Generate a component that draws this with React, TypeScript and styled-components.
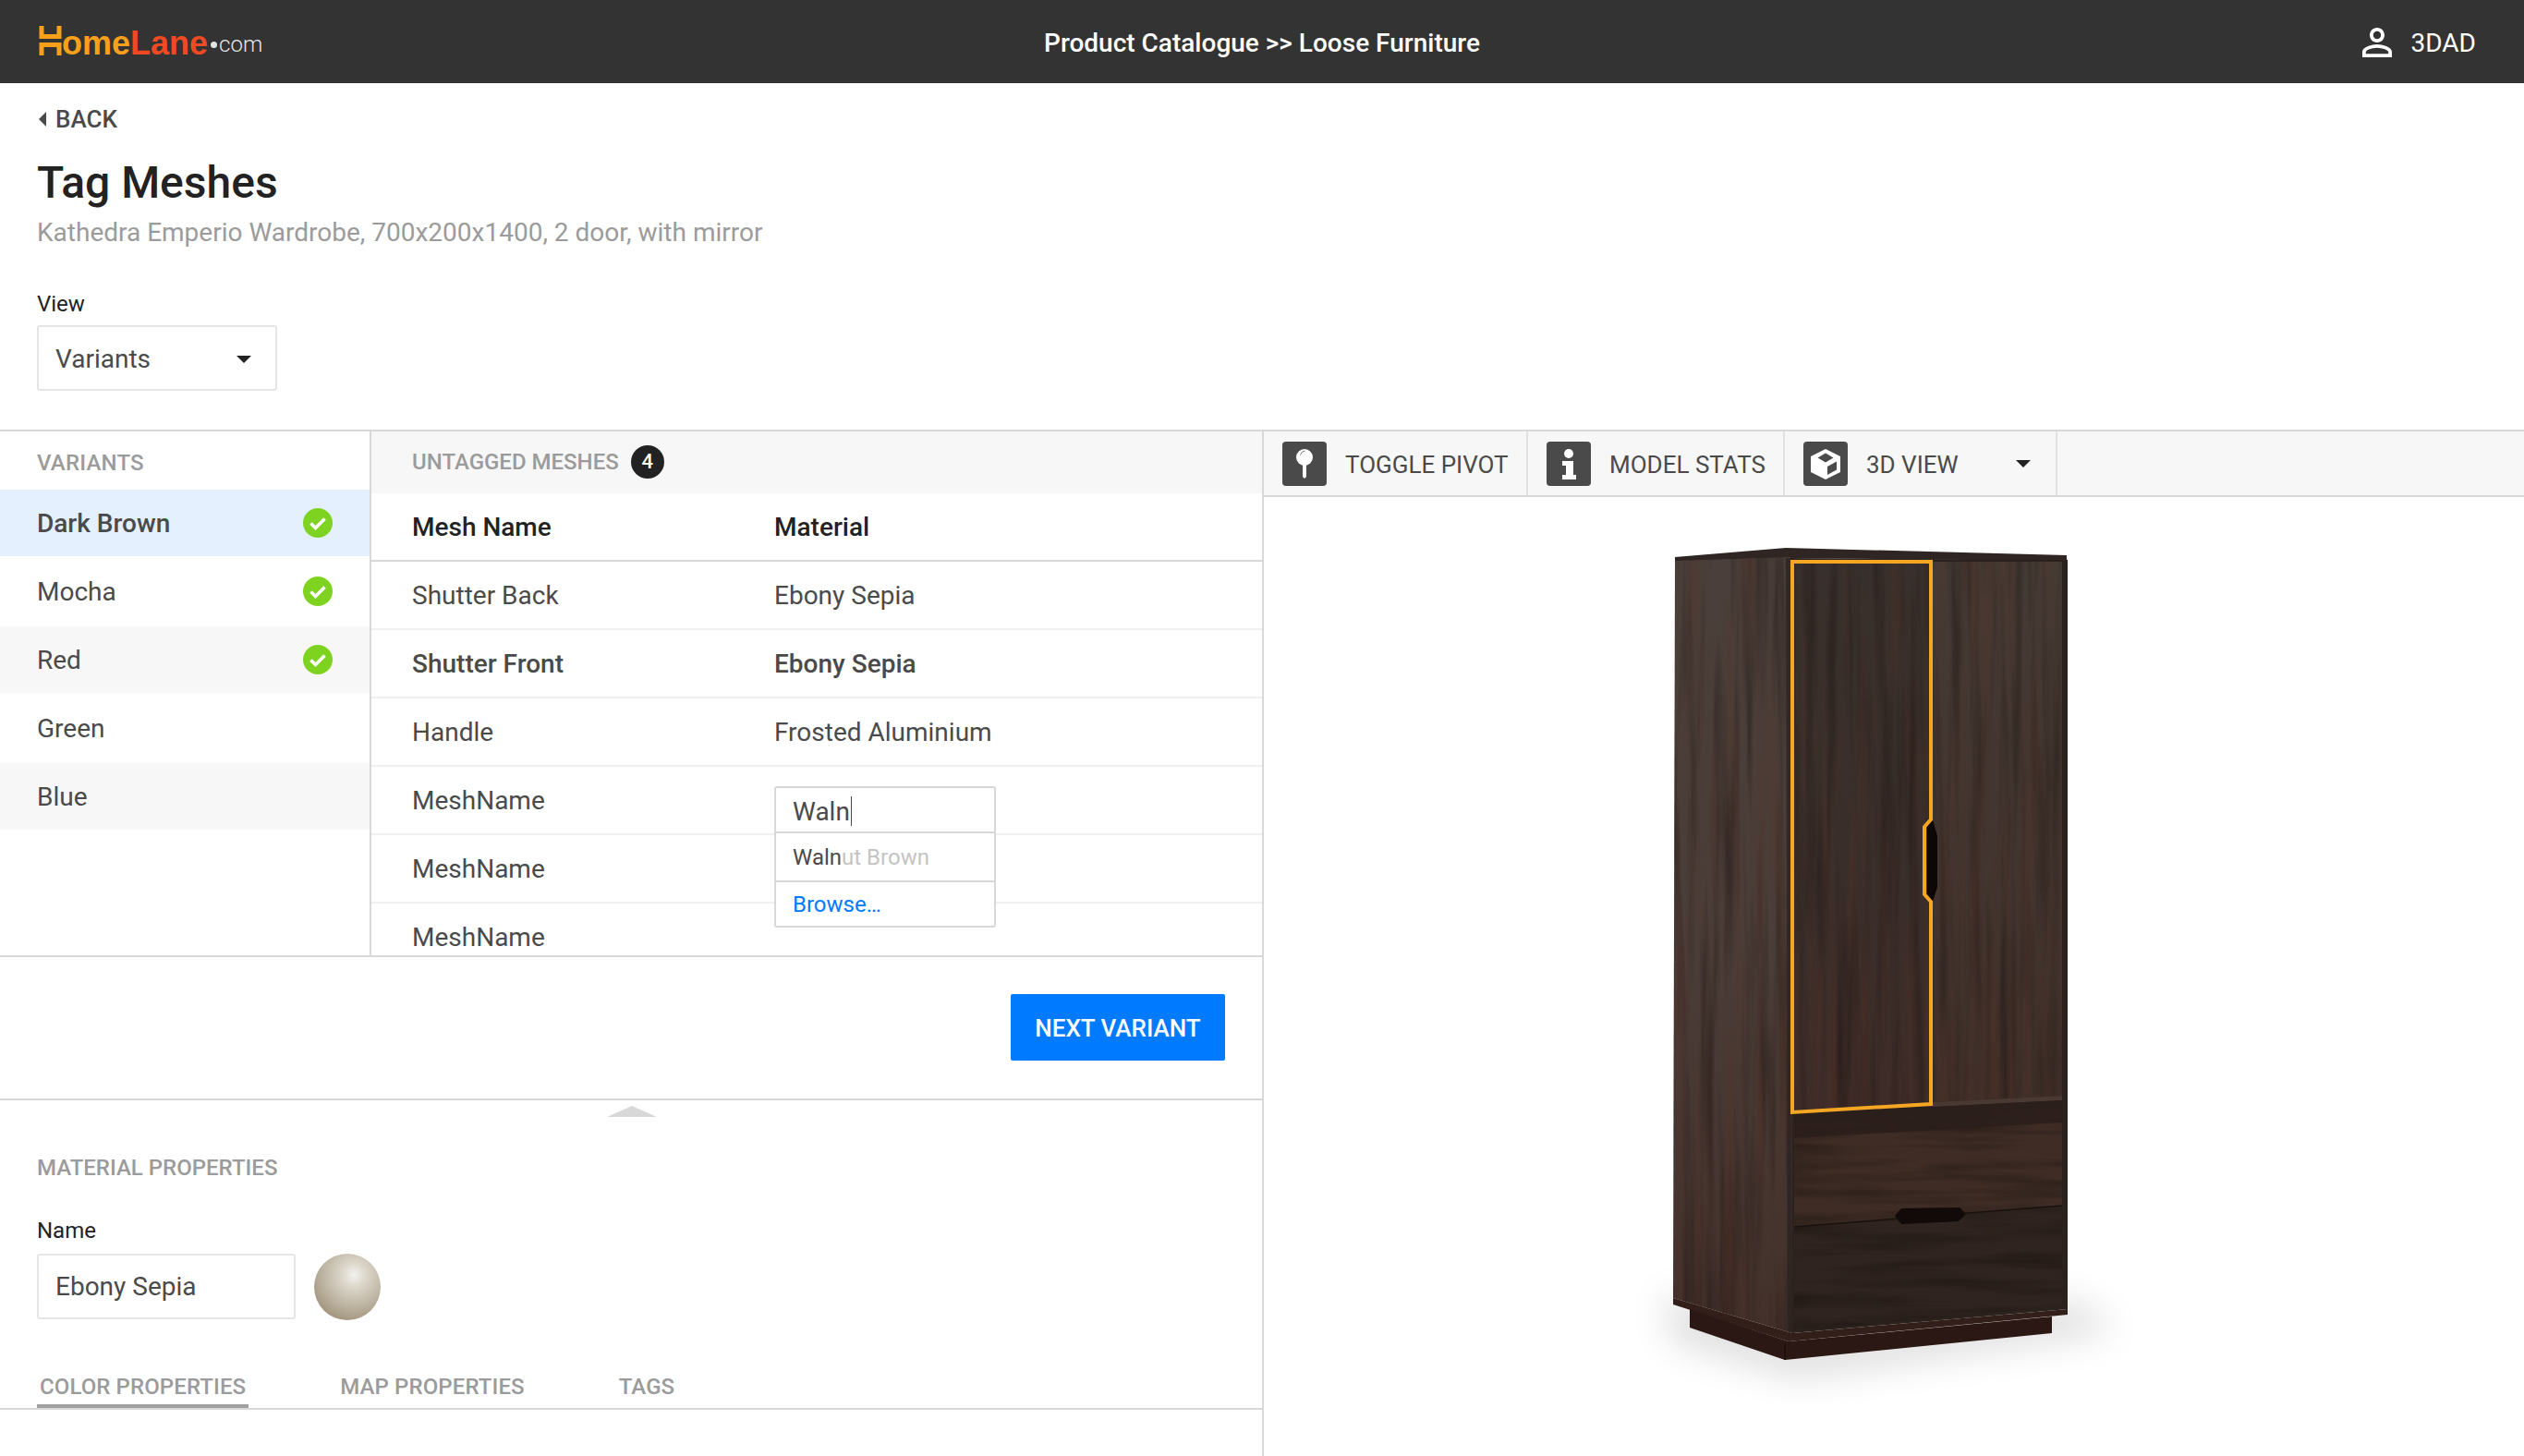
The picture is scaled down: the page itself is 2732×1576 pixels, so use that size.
import React from "react";
import styled, { createGlobalStyle } from "styled-components";

const GlobalStyle = createGlobalStyle`
    html, body {
        margin: 0;
        padding: 0;
        background: #fff;
    }
    * {
        box-sizing: border-box;
    }
`;

const Page = styled.div`
    width: 2732px;
    height: 1576px;
    overflow: hidden;
    background: #fff;
    font-family: Roboto, "Liberation Sans", sans-serif;
    color: #4a4a4a;
`;

const Header = styled.header`
    height: 90px;
    background: #333;
    color: #fff;
    display: grid;
    grid-template-columns: 1fr auto 1fr;
    align-items: center;
    padding: 2px 52px 0;
`;

const Logo = styled.div`
    display: flex;
    align-items: flex-end;
    height: 32px;
    margin: -4px 0 0 -10px;
    font-family: "Liberation Sans", Arial, sans-serif;
`;

const LogoWord = styled.span<{ $color: string }>`
    color: ${(p) => p.$color};
    font-size: 36px;
    font-weight: 700;
    line-height: 26px;
    letter-spacing: 0;
`;

const LogoDot = styled.span`
    width: 7px;
    height: 7px;
    border-radius: 50%;
    background: #e4e4e4;
    margin: 0 2px 8px 3px;
`;

const LogoCom = styled.span`
    font-family: Roboto, sans-serif;
    font-weight: 300;
    font-size: 24px;
    line-height: 24px;
    color: #e6e6e6;
`;

const HeaderTitle = styled.div`
    font-size: 28px;
    font-weight: 500;
`;

const UserBox = styled.div`
    display: flex;
    justify-content: flex-end;
    align-items: center;
    gap: 13px;
    font-size: 28px;
    font-weight: 400;
`;

const TopSection = styled.section`
    height: 375px;
    padding: 24px 40px 0;
`;

const BackLink = styled.div`
    display: flex;
    align-items: center;
    gap: 10px;
    padding-left: 2px;
    font-size: 26px;
    font-weight: 500;
    line-height: 30px;
`;

const BackArrow = styled.i`
    width: 0;
    height: 0;
    border-top: 8px solid transparent;
    border-bottom: 8px solid transparent;
    border-right: 8px solid #4a4a4a;
`;

const PageTitle = styled.h1`
    margin: 26px 0 0;
    font-size: 48px;
    font-weight: 500;
    line-height: 56px;
    color: #222;
`;

const SubTitle = styled.div`
    margin-top: 8px;
    font-size: 28px;
    line-height: 36px;
    color: #9b9b9b;
`;

const FieldLabel = styled.div<{ $top: number }>`
    margin-top: ${(p) => p.$top}px;
    font-size: 24px;
    line-height: 30px;
    color: #222;
`;

const SelectBox = styled.div`
    margin-top: 8px;
    width: 260px;
    height: 71px;
    border: 2px solid #e5e5e5;
    border-radius: 3px;
    padding: 2px 26px 0 18px;
    display: flex;
    align-items: center;
    justify-content: space-between;
    font-size: 28px;
`;

const Caret = styled.i`
    width: 0;
    height: 0;
    border-left: 8px solid transparent;
    border-right: 8px solid transparent;
    border-top: 8px solid #222;
`;

const Workspace = styled.main`
    display: grid;
    grid-template-columns: 1368px 1fr;
    height: 1111px;
    border-top: 2px solid #d8d8d8;
`;

const LeftPane = styled.div`
    border-right: 2px solid #d8d8d8;
    display: flex;
    flex-direction: column;
    min-width: 0;
`;

const Lists = styled.div`
    display: grid;
    grid-template-columns: 402px 1fr;
    height: 569px;
    border-bottom: 2px solid #d8d8d8;
    overflow: hidden;
`;

const VariantColumn = styled.div`
    border-right: 2px solid #d8d8d8;
`;

const SectionHead = styled.div<{ $shaded?: boolean }>`
    display: flex;
    align-items: center;
    gap: 13px;
    font-size: 24px;
    font-weight: 500;
    color: #9b9b9b;
    background: ${(p) => (p.$shaded ? "#f7f7f7" : "#fff")};
`;

const VariantHead = styled(SectionHead)`
    height: 63px;
    padding: 4px 40px 0;
    letter-spacing: 0.2px;
`;

const VariantRow = styled.div<{ $bg: string; $active?: boolean }>`
    height: 74px;
    border-bottom: 2px solid #fff;
    display: flex;
    align-items: center;
    justify-content: space-between;
    padding: 0 40px;
    font-size: 28px;
    background: ${(p) => p.$bg};
    font-weight: ${(p) => (p.$active ? 500 : 400)};
`;

const MeshColumn = styled.div`
    position: relative;
    min-width: 0;
`;

const MeshHead = styled(SectionHead)`
    height: 67px;
    padding: 0 44px 2px;
`;

const Badge = styled.span`
    width: 36px;
    height: 36px;
    border-radius: 50%;
    background: #222;
    color: #fff;
    font-size: 22px;
    font-weight: 500;
    display: flex;
    align-items: center;
    justify-content: center;
`;

const MeshRow = styled.div<{ $head?: boolean; $bold?: boolean }>`
    height: 74px;
    display: grid;
    grid-template-columns: 392px 1fr;
    align-items: center;
    padding-left: 44px;
    font-size: 28px;
    border-bottom: 2px solid ${(p) => (p.$head ? "#d8d8d8" : "#f0f0f0")};
    font-weight: ${(p) => (p.$head || p.$bold ? 500 : 400)};
    color: ${(p) => (p.$head ? "#222" : "#4a4a4a")};
`;

const Suggest = styled.div`
    position: absolute;
    left: 436px;
    top: 384px;
    width: 240px;
    height: 153px;
    background: #fff;
    border: 2px solid #d8d8d8;
    border-radius: 3px;
    display: flex;
    flex-direction: column;
`;

const SuggestInput = styled.div`
    height: 49px;
    padding: 3px 18px 0;
    display: flex;
    align-items: center;
    font-size: 28px;
    border-bottom: 2px solid #d8d8d8;
`;

const TextCursor = styled.i`
    width: 1px;
    height: 32px;
    margin-left: 1px;
    background: #4a4a4a;
`;

const SuggestItem = styled.div<{ $h: number; $divider?: boolean; $link?: boolean }>`
    height: ${(p) => p.$h}px;
    padding: 0 18px;
    display: flex;
    align-items: center;
    font-size: 24px;
    color: ${(p) => (p.$link ? "#007aff" : "#4a4a4a")};
    border-bottom: ${(p) => (p.$divider ? "2px solid #d8d8d8" : "none")};
`;

const Ghost = styled.span`
    color: #c4c4c4;
`;

const ActionBar = styled.div`
    height: 155px;
    display: flex;
    justify-content: flex-end;
    padding: 40px 40px 0 0;
    border-bottom: 2px solid #d8d8d8;
`;

const PrimaryButton = styled.button`
    width: 232px;
    height: 72px;
    padding: 2px 0 0;
    border: none;
    border-radius: 2px;
    background: #007aff;
    color: #fff;
    font-family: inherit;
    font-size: 26px;
    font-weight: 500;
`;

const Material = styled.section`
    position: relative;
    flex: 1;
    display: flex;
    flex-direction: column;
`;

const CollapseTab = styled.i`
    position: absolute;
    left: 657px;
    top: 6px;
    width: 0;
    height: 0;
    border-left: 27px solid transparent;
    border-right: 27px solid transparent;
    border-bottom: 12px solid #d8d8d8;
`;

const MaterialTitle = styled.div`
    margin: 58px 40px 0;
    font-size: 24px;
    font-weight: 500;
    line-height: 30px;
    color: #9b9b9b;
`;

const MaterialBody = styled.div`
    padding: 0 40px;
`;

const NameRow = styled.div`
    display: flex;
    gap: 20px;
    margin-top: 10px;
`;

const TextBox = styled.div`
    width: 280px;
    height: 71px;
    border: 2px solid #e5e5e5;
    border-radius: 3px;
    padding: 0 18px;
    display: flex;
    align-items: center;
    font-size: 28px;
`;

const Swatch = styled.div`
    width: 72px;
    height: 72px;
    border-radius: 50%;
    background: radial-gradient(circle at 60% 32%, #f3f2ee 0%, #dcd7cb 20%, #bfb6a4 50%, #a0937b 80%);
`;

const TabBar = styled.nav`
    display: flex;
    gap: 96px;
    height: 58px;
    margin-top: 39px;
    padding: 0 40px;
    border-bottom: 2px solid #d8d8d8;
`;

const Tab = styled.div<{ $active?: boolean }>`
    padding: 14px 3px 0;
    height: 56px;
    display: flex;
    align-items: center;
    font-size: 24px;
    font-weight: 500;
    letter-spacing: 0.1px;
    color: #9b9b9b;
    border-bottom: 4px solid ${(p) => (p.$active ? "#a0a0a0" : "transparent")};
`;

const RightPane = styled.div`
    min-width: 0;
`;

const Toolbar = styled.div`
    display: flex;
    height: 71px;
    background: #f7f7f7;
    border-bottom: 2px solid #d8d8d8;
`;

const ToolButton = styled.div<{ $width: number }>`
    width: ${(p) => p.$width}px;
    display: flex;
    align-items: center;
    gap: 20px;
    padding: 0 19px 0 20px;
    font-size: 26px;
    white-space: nowrap;
    border-right: 2px solid #e2e2e2;
`;

const ToolLabel = styled.span`
    padding-top: 3px;
`;

const ToolIcon = styled.svg`
    width: 48px;
    height: 48px;
    flex: none;
`;

const ToolCaret = styled(Caret)`
    margin-left: auto;
    margin-right: 8px;
`;

const Viewer = styled.div`
    padding: 22px 0 0 332px;
`;

const PersonIcon = () => (
    <svg width="48" height="48" viewBox="0 0 24 24" fill="#fff">
        <path d="M12 5.9a2.1 2.1 0 1 1 0 4.2 2.1 2.1 0 0 1 0-4.2m0 9c2.97 0 6.1 1.46 6.1 2.1v1.1H5.9V17c0-.64 3.13-2.1 6.1-2.1M12 4C9.79 4 8 5.79 8 8s1.79 4 4 4 4-1.79 4-4-1.79-4-4-4zm0 9c-2.67 0-8 1.34-8 4v3h16v-3c0-2.66-5.33-4-8-4z" />
    </svg>
);

const LogoMark = () => (
    <svg width="25" height="32" viewBox="0 0 24 32" fill="#f9a01b">
        <path d="M0 0h5v9h14V0h5v14H0z" />
        <path d="M0 18h24v14h-5v-9H5v9H0z" />
    </svg>
);

const CheckIcon = () => (
    <svg width="32" height="32" viewBox="0 0 32 32">
        <circle cx="16" cy="16" r="16" fill="#7ed321" />
        <path d="M8.5 16.5l5 5 10-10" fill="none" stroke="#fff" strokeWidth="3.6" />
    </svg>
);

const PinIcon = () => (
    <ToolIcon viewBox="0 0 48 48">
        <rect width="48" height="48" rx="4" fill="#4a4a4a" />
        <circle cx="24" cy="17" r="9" fill="#fff" />
        <path d="M19.5 14.5a6 6 0 0 1 5-4.5" fill="none" stroke="#777" strokeWidth="1" />
        <path d="M22 25h4v13l-2 2-2-2z" fill="#fff" />
    </ToolIcon>
);

const InfoIcon = () => (
    <ToolIcon viewBox="0 0 48 48">
        <rect width="48" height="48" rx="4" fill="#4a4a4a" />
        <circle cx="24" cy="13" r="5" fill="#fff" />
        <path d="M17 21h12v15h3v5H17v-5h4V26h-4z" fill="#fff" />
    </ToolIcon>
);

const CubeIcon = () => (
    <ToolIcon viewBox="0 0 48 48">
        <rect width="48" height="48" rx="4" fill="#4a4a4a" />
        <path d="M24 8l16 8v17l-16 8-16-8V16z" fill="#fff" />
        <path d="M24 12.5l8.5 5-8.5 5-8.5-5z" fill="#4a4a4a" />
        <path d="M26 27l10-5.5v9L26 36z" fill="#4a4a4a" />
    </ToolIcon>
);

// wardrobe is drawn in page coordinates so the numbers can be read off the reference
const Wardrobe = () => (
    <svg width="700" height="960" viewBox="1700 560 700 960">
        <defs>
            <filter id="grainV" x="0" y="0" width="100%" height="100%" colorInterpolationFilters="sRGB">
                <feTurbulence type="fractalNoise" baseFrequency="0.09 0.004" numOctaves="3" seed="7" result="n" />
                <feColorMatrix in="n" type="matrix" values="0 0 0 0 0.12  0 0 0 0 0.08  0 0 0 0 0.07  1.1 0 0 0 -0.47" result="dark" />
                <feColorMatrix in="n" type="matrix" values="0 0 0 0 0.34  0 0 0 0 0.2  0 0 0 0 0.16  0 0.9 0 0 -0.42" result="red" />
                <feComposite in="dark" in2="SourceGraphic" operator="in" result="d" />
                <feComposite in="red" in2="SourceGraphic" operator="in" result="r" />
                <feMerge>
                    <feMergeNode in="SourceGraphic" />
                    <feMergeNode in="d" />
                    <feMergeNode in="r" />
                </feMerge>
            </filter>
            <filter id="grainH" x="0" y="0" width="100%" height="100%" colorInterpolationFilters="sRGB">
                <feTurbulence type="fractalNoise" baseFrequency="0.006 0.07" numOctaves="3" seed="4" result="n" />
                <feColorMatrix in="n" type="matrix" values="0 0 0 0 0.08  0 0 0 0 0.05  0 0 0 0 0.04  1 0 0 0 -0.42" result="dark" />
                <feComposite in="dark" in2="SourceGraphic" operator="in" result="d" />
                <feMerge>
                    <feMergeNode in="SourceGraphic" />
                    <feMergeNode in="d" />
                </feMerge>
            </filter>
            <filter id="soft" x="-30%" y="-100%" width="160%" height="300%">
                <feGaussianBlur stdDeviation="20" />
            </filter>
            <linearGradient id="sideFill" x1="0" y1="0" x2="0" y2="1">
                <stop offset="0" stopColor="#4a3f3a" />
                <stop offset="0.5" stopColor="#4b3d38" />
                <stop offset="1" stopColor="#43302a" />
            </linearGradient>
            <linearGradient id="doorFill" x1="0" y1="0" x2="0" y2="1">
                <stop offset="0" stopColor="#38302c" />
                <stop offset="0.6" stopColor="#3a2e2a" />
                <stop offset="1" stopColor="#3f2c28" />
            </linearGradient>
            <linearGradient id="rightFill" x1="0" y1="0" x2="0" y2="1">
                <stop offset="0" stopColor="#453b35" />
                <stop offset="1" stopColor="#402f29" />
            </linearGradient>
        </defs>

        <path d="M1800 1400 L1940 1450 L2250 1410 L2290 1440 L1945 1490 L1810 1450z" fill="#000" opacity="0.14" filter="url(#soft)" />

        <path d="M1813 603 L1933 593 L2237 601 L2237 607 L1936 604 L1813 608z" fill="#2f2623" />
        <path d="M1813 607 L1938 603 L1940 1443 L1811 1405z" fill="url(#sideFill)" filter="url(#grainV)" />
        <path d="M1933 604 L1940 604 L1942 1443 L1935 1441z" fill="#2c2320" opacity="0.8" />
        <path d="M1938 604 L2238 606 L2238 1417 L1940 1443z" fill="#2b211d" />

        <path d="M1940 608 L2090 608 L2090 1195 L1940 1204z" fill="url(#doorFill)" filter="url(#grainV)" />
        <path d="M2092 608 L2232 608 L2232 1186 L2092 1193z" fill="url(#rightFill)" filter="url(#grainV)" />
        <path d="M2092 1193 L2232 1186 L2232 1191 L2092 1198z" fill="#4a3832" />

        <path d="M1942 1216 L2232 1197 L2232 1305 L1942 1328z" fill="#3e2c25" filter="url(#grainH)" />
        <path d="M1942 1206 L2232 1191 L2232 1215 L1942 1232z" fill="#2a1f1b" opacity="0.85" />
        <path d="M1942 1329 L2232 1306 L2232 1414 L1942 1441z" fill="#2f241f" filter="url(#grainH)" />
        <path d="M1942 1328 L2232 1305" stroke="#1a120f" strokeWidth="1.5" />

        <path d="M2051 1316 L2058 1308 L2121 1307 L2128 1314 L2120 1322 L2058 1325z" fill="#120a08" />
        <path d="M2086 893 L2092 887 L2097 905 L2097 960 L2092 976 L2086 968z" fill="#0d0705" />

        <path d="M1811 1405 L1940 1443 L2238 1417 L2238 1423 L1936 1452 L1811 1412z" fill="#331f19" />
        <path d="M1829 1417 L1936 1452 L2221 1425 L2221 1443 L1932 1472 L1829 1437z" fill="#2b1713" />
        <path d="M1932 1455 L1932 1472" stroke="#1f100d" strokeWidth="2" />

        <path
            d="M1940 608 L2090 608 L2090 887 L2083 895 L2083 968 L2090 976 L2090 1195 L1940 1204z"
            fill="none"
            stroke="#f5a623"
            strokeWidth="4"
        />
    </svg>
);

const variants = [
    { name: "Dark Brown", bg: "#e4f0fd", done: true, active: true },
    { name: "Mocha", bg: "#fff", done: true },
    { name: "Red", bg: "#f7f7f7", done: true },
    { name: "Green", bg: "#fff" },
    { name: "Blue", bg: "#f7f7f7" },
];

const meshes = [
    { name: "Shutter Back", material: "Ebony Sepia" },
    { name: "Shutter Front", material: "Ebony Sepia", bold: true },
    { name: "Handle", material: "Frosted Aluminium" },
    { name: "MeshName", material: "" },
    { name: "MeshName", material: "" },
    { name: "MeshName", material: "" },
];

export default function App() {
    return (
        <Page>
            <GlobalStyle />
            <Header>
                <Logo>
                    <LogoMark />
                    <LogoWord $color="#f9a01b">ome</LogoWord>
                    <LogoWord $color="#ef4a24">Lane</LogoWord>
                    <LogoDot />
                    <LogoCom>com</LogoCom>
                </Logo>
                <HeaderTitle>Product Catalogue &gt;&gt; Loose Furniture</HeaderTitle>
                <UserBox>
                    <PersonIcon />
                    3DAD
                </UserBox>
            </Header>

            <TopSection>
                <BackLink>
                    <BackArrow />
                    BACK
                </BackLink>
                <PageTitle>Tag Meshes</PageTitle>
                <SubTitle>Kathedra Emperio Wardrobe, 700x200x1400, 2 door, with mirror</SubTitle>
                <FieldLabel $top={44}>View</FieldLabel>
                <SelectBox>
                    Variants
                    <Caret />
                </SelectBox>
            </TopSection>

            <Workspace>
                <LeftPane>
                    <Lists>
                        <VariantColumn>
                            <VariantHead>VARIANTS</VariantHead>
                            {variants.map((v) => (
                                <VariantRow key={v.name} $bg={v.bg} $active={v.active}>
                                    {v.name}
                                    {v.done && <CheckIcon />}
                                </VariantRow>
                            ))}
                        </VariantColumn>
                        <MeshColumn>
                            <MeshHead $shaded>
                                UNTAGGED MESHES
                                <Badge>4</Badge>
                            </MeshHead>
                            <MeshRow $head>
                                <span>Mesh Name</span>
                                <span>Material</span>
                            </MeshRow>
                            {meshes.map((m, i) => (
                                <MeshRow key={i} $bold={m.bold}>
                                    <span>{m.name}</span>
                                    <span>{m.material}</span>
                                </MeshRow>
                            ))}
                            <Suggest>
                                <SuggestInput>
                                    Waln
                                    <TextCursor />
                                </SuggestInput>
                                <SuggestItem $h={53} $divider>
                                    Waln<Ghost>ut Brown</Ghost>
                                </SuggestItem>
                                <SuggestItem $h={47} $link>
                                    Browse…
                                </SuggestItem>
                            </Suggest>
                        </MeshColumn>
                    </Lists>
                    <ActionBar>
                        <PrimaryButton>NEXT VARIANT</PrimaryButton>
                    </ActionBar>
                    <Material>
                        <CollapseTab />
                        <MaterialTitle>MATERIAL PROPERTIES</MaterialTitle>
                        <MaterialBody>
                            <FieldLabel $top={38}>Name</FieldLabel>
                            <NameRow>
                                <TextBox>Ebony Sepia</TextBox>
                                <Swatch />
                            </NameRow>
                        </MaterialBody>
                        <TabBar>
                            <Tab $active>COLOR PROPERTIES</Tab>
                            <Tab>MAP PROPERTIES</Tab>
                            <Tab>TAGS</Tab>
                        </TabBar>
                    </Material>
                </LeftPane>
                <RightPane>
                    <Toolbar>
                        <ToolButton $width={286}>
                            <PinIcon />
                            <ToolLabel>TOGGLE PIVOT</ToolLabel>
                        </ToolButton>
                        <ToolButton $width={278}>
                            <InfoIcon />
                            <ToolLabel>MODEL STATS</ToolLabel>
                        </ToolButton>
                        <ToolButton $width={295}>
                            <CubeIcon />
                            <ToolLabel>3D VIEW</ToolLabel>
                            <ToolCaret />
                        </ToolButton>
                    </Toolbar>
                    <Viewer>
                        <Wardrobe />
                    </Viewer>
                </RightPane>
            </Workspace>
        </Page>
    );
}
